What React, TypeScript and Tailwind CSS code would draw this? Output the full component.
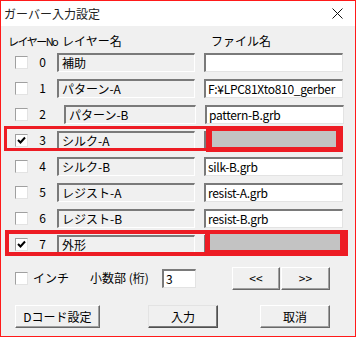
const font = "font-['MS_UI_Gothic','Noto_Sans_CJK_JP',sans-serif]"

const rows = [
  { no: 0, name: '補助', file: '', checked: false },
  { no: 1, name: 'パターン-A', file: 'F:¥LPC81Xto810_gerber', checked: false },
  { no: 2, name: 'パターン-B', file: 'pattern-B.grb', checked: false, shifted: true },
  { no: 3, name: 'シルク-A', file: '', checked: true, mark: 'a' },
  { no: 4, name: 'シルク-B', file: 'silk-B.grb', checked: false },
  { no: 5, name: 'レジスト-A', file: 'resist-A.grb', checked: false },
  { no: 6, name: 'レジスト-B', file: 'resist-B.grb', checked: false },
  { no: 7, name: '外形', file: '', checked: true, mark: 'b' },
]

function CheckBox({ checked }: { checked: boolean }) {
  return (
    <div className="w-[13px] h-[13px] shrink-0 bg-white border border-t-[#a0a0a0] border-l-[#a0a0a0] border-r-[#e3e3e3] border-b-[#e3e3e3] flex items-center justify-center">
      {checked && (
        <svg width="9" height="9" viewBox="0 0 9 9">
          <path d="M1 4 L3.5 6.5 L8 1.5" stroke="#000" strokeWidth="2" fill="none" />
        </svg>
      )}
    </div>
  )
}

function Btn({ label, w, def }: { label: string; w: string; def?: boolean }) {
  return (
    <div
      className={`${w} h-[23px] shrink-0 flex items-center justify-center bg-[#f0f0f0] text-[12px] leading-none text-black border ${
        def
          ? 'border-t-[#e3e3e3] border-l-[#e3e3e3] border-r-[#505050] border-b-[#505050] shadow-[inset_-1px_-1px_0_#7a7a7a]'
          : 'border-t-white border-l-white border-r-[#696969] border-b-[#696969] shadow-[inset_-1px_-1px_0_#a0a0a0]'
      }`}
    >
      {label}
    </div>
  )
}

export default function App() {
  return (
    <div className={`w-[356px] h-[337px] border border-[#ff1a1a] bg-[#f0f0f0] text-black ${font} overflow-hidden`}>
      {/* Title */}
      <div className="h-[25px] bg-white flex items-center justify-between pl-[3px] pr-[12px]">
        <span className="text-[12px] leading-none text-[#222]">ガーバー入力設定</span>
        <svg width="11" height="11" viewBox="0 0 11 11">
          <path d="M0.5 0.5 L10.5 10.5 M10.5 0.5 L0.5 10.5" stroke="#111" strokeWidth="1" />
        </svg>
      </div>

      {/* Header */}
      <div className="h-[23px] pt-[9px] pl-[7px] flex text-[12px] leading-[12px] whitespace-nowrap">
        <span className="w-[54px] text-[11px] tracking-[-1.5px]">レイヤーNo</span>
        <span className="w-[149px]">レイヤー名</span>
        <span>ファイル名</span>
      </div>

      {/* Rows */}
      <div className="flex flex-col">
        {rows.map((r) => (
          <div key={r.no} className="relative h-[26px] flex items-center pl-[14px]">
            <CheckBox checked={r.checked} />
            <span className="w-[29px] text-center text-[12px] leading-none">{r.no}</span>
            <div
              className={`${r.shifted ? 'ml-[7px] w-[132px]' : 'w-[138px]'} h-[19px] bg-[#f0f0f0] border-t-2 border-l-2 border-r border-b border-t-[#7a7a7a] border-l-[#7a7a7a] border-r-white border-b-white pl-[3px] text-[12px] leading-[16px] whitespace-nowrap overflow-hidden`}
            >
              {r.name}
            </div>
            <div className="ml-[9px] w-[139px] h-[19px] bg-white border-t-2 border-l-2 border-r border-b border-t-[#7a7a7a] border-l-[#7a7a7a] border-r-[#e3e3e3] border-b-[#e3e3e3] pl-[2px] text-[12px] tracking-[-0.3px] leading-[16px] whitespace-nowrap overflow-hidden">
              {r.file}
            </div>

            {r.mark === 'a' && (
              <>
                <div className="absolute left-[3px] top-[-1px] w-[339px] h-[25px] border-[3px] border-[#ed1c24]" />
                <div className="absolute left-[205px] top-[-1px] w-[137px] h-[26px] bg-[#ed1c24] pl-[6px] pt-[5px] pr-[7px] pb-[5px]">
                  <div className="w-full h-full bg-[#c3c3c3]" />
                </div>
              </>
            )}
            {r.mark === 'b' && (
              <>
                <div className="absolute left-[4px] top-[-1px] w-[343px] h-[26px] border-[4px] border-[#ed1c24]" />
                <div className="absolute left-[204px] top-[-1px] w-[143px] h-[26px] bg-[#ed1c24] pl-[5px] pt-[4px] pr-[8px] pb-[6px]">
                  <div className="w-full h-full bg-[#c3c3c3]" />
                </div>
              </>
            )}
          </div>
        ))}
      </div>

      {/* Options */}
      <div className="mt-[10px] h-[22px] flex items-center pl-[14px] text-[12px] leading-none whitespace-nowrap">
        <CheckBox checked={false} />
        <span className="ml-[5px] w-[57px]">インチ</span>
        <span className="w-[72px]">小数部 (桁)</span>
        <div className="w-[34px] h-[19px] bg-white border-t-2 border-l-2 border-r border-b border-t-[#7a7a7a] border-l-[#7a7a7a] border-r-[#e3e3e3] border-b-[#e3e3e3] pl-[2px] leading-[16px]">
          3
        </div>
        <div className="ml-[36px] flex">
          <Btn label="<<" w="w-[48px]" />
          <Btn label=">>" w="ml-[1px] w-[49px]" />
        </div>
      </div>

      {/* Buttons */}
      <div className="mt-[16px] flex pl-[14px]">
        <Btn label="Dコード設定" w="w-[85px]" />
        <Btn label="入力" w="ml-[48px] w-[70px]" def />
        <Btn label="取消" w="ml-[42px] w-[70px]" />
      </div>
    </div>
  )
}
